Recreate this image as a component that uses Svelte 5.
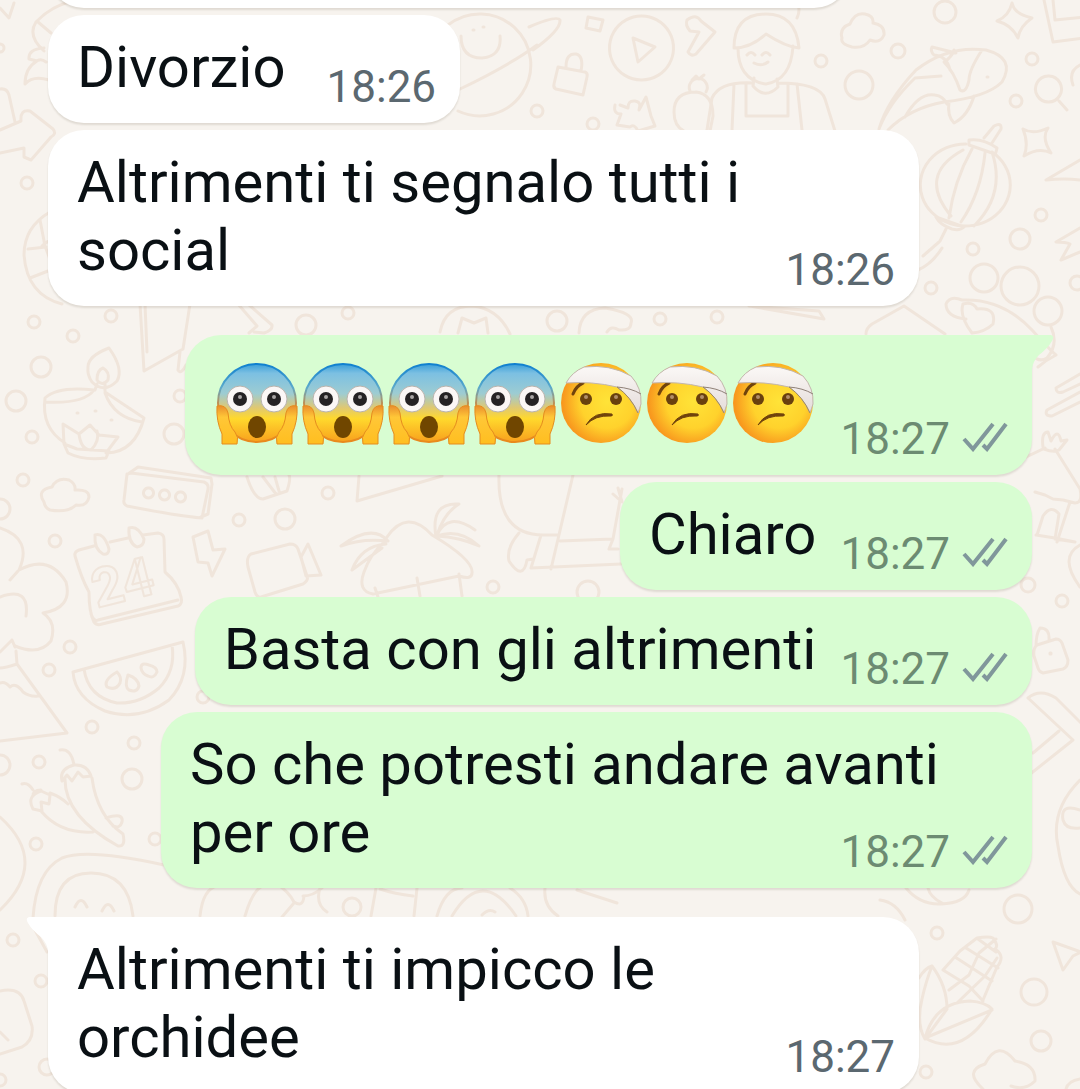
<script lang="ts">
  interface Message {
    out: boolean;
    text?: string;
    emojis?: string[];
    time: string;
    first?: boolean;
  }

  const messages: Message[] = [
    { out: false, text: 'Divorzio', time: '18:26' },
    { out: false, text: 'Altrimenti ti segnalo tutti i social', time: '18:26' },
    {
      out: true,
      emojis: ['scream', 'scream', 'scream', 'scream', 'bandage', 'bandage', 'bandage'],
      time: '18:27',
      first: true
    },
    { out: true, text: 'Chiaro', time: '18:27' },
    { out: true, text: 'Basta con gli altrimenti', time: '18:27' },
    { out: true, text: 'So che potresti andare avanti per ore', time: '18:27' },
    { out: false, text: 'Altrimenti ti impicco le orchidee', time: '18:27', first: true }
  ];

  // wallpaper bubbles: cx, cy, r
  const dots = [
    [945, 12, 11], [821, 61, 6], [898, 51, 7], [859, 85, 14], [1032, 59, 6], [1016, 101, 6],
    [537, 111, 6], [593, 124, 6], [1041, 215, 6], [1020, 239, 10], [973, 249, 6], [984, 278, 14],
    [1020, 286, 19], [1048, 311, 14], [931, 288, 6], [557, 321, 10], [660, 319, 6], [717, 317, 6],
    [1077, 283, 7], [34, 322, 6], [73, 336, 6], [111, 316, 6], [41, 367, 10], [16, 401, 10],
    [32, 437, 6], [23, 480, 6], [174, 434, 10], [180, 396, 6], [306, 325, 10], [348, 313, 6],
    [328, 493, 6], [239, 520, 6], [285, 519, 10], [55, 541, 6], [0, 509, 10], [70, 647, 6],
    [49, 670, 6], [92, 727, 6], [134, 743, 6], [132, 779, 10], [39, 762, 6], [0, 765, 10],
    [36, 844, 6], [155, 839, 6], [13, 940, 6], [41, 981, 6], [47, 1067, 8], [0, 1080, 6],
    [203, 697, 6], [493, 587, 6], [588, 592, 11], [1018, 909, 14], [937, 933, 6], [1034, 992, 13],
    [1041, 1041, 10], [926, 1072, 6], [1062, 601, 6], [1014, 681, 6], [1028, 585, 7], [27, 183, 6],
    [0, 48, 4], [352, 907, 9]
  ];

  const doodles = [
    // planet
    'M448 25a51 51 0 1 1 10 86M460 89Q510 65 537 45M529 27Q557 15 560 20Q561 30 533 50M461 36Q461 58 482 58Q502 56 500 36M473 30h1M483 27h1',
    // small cube, padlock, play
    'M588 17l15 3l-3 11l-14-3zM558 67l27 5q3 1 2 5l-4 18l-27-6q-3-1-2-5zM566 67q0-14 10-13q8 2 5 17M642 16a32 32 0 1 1-1 0M633 38l22 9l-17 15z',
    // mug and puzzle
    'M687 20q9-7 14 1l14 11l-19 22q-5 3-8-2l11-20l-9-1q-5-6-3-11M620 105l8 3q0-8 7-7q7 1 4 9l7-13l5 19l4 10l-17 5q-4-8-8-4l-13-2l4-11q-8 0-6-9',
    // cook
    'M734 48q0-34 32-34q30 0 33 34q-13-1-33-14q-15 14-32 14M738 48q0 32 28 36q25-4 27-38M754 78l-1 8q12 14 25 1l-1-8M753 83q-33-2-41 15l-5 32M778 83q42 0 47 16l10 32M734 84l-2 46M797 84l5 46M746 84v32h42V84M747 55q4-5 8 0M762 55q4-5 8 0M754 63q8 4 14-1M797 18q4-8 0-18',
    // pineapple
    'M696 92q17 2 17 24l-3 15M696 92q-22 0-22 20q0 14 10 19M690 91a9 9 0 1 1 16 1M692 80l4-4l3 3l5-4',
    // clouds
    'M842 38q-3-10 8-14q5-12 15-10q9 2 8 9q12 2 11 12q-4 9-14 5q-6 9-18 7q-12-3-10-9M44 502q-8-12 8-15q5-10 17-7q7 4 6 10q14-1 14 7q-2 10-13 8q-8 8-26 5q-5-2-6-8',
    // star shapes
    'M1012 3q2 11 20 15q-12 8-14 20q-6-13-21-17q12-5 15-18M1023 129q10 6 25-1q-7 10 3 25q-12-6-27 3q5-12-1-27',
    // koi
    'M879 129q8-28 37-59q32-25 70-20q30 8 16 32q-15 15-58 20q-34 6-56 28M950 70q-3-14-16-15q-4-4-2-8l24 6M879 129q10-26 36-51l26-2M905 117q14-25 30-22q8 1 12 9M954 50q-2 7-10 12q10 10 16 28q6 4 9-10q0-10 13-30M949 102q-2 14 5 21q14-7 20-27M987 77h1',
    // lantern
    'M966 144a45 41 0 1 0 26 8M963 150q-46 25-12 66M972 149q-18 32-23 69M985 153q-4 40-24 69M992 152q14 42-18 74M969 140q14-2 28 8q-1 5-2 6l-26-9zM936 217l28 10q-4 4-12 2q-12-4-16-12M984 138l10-12q8-4 7 3l-9 14M946 229l-6 12M939 242l-16 14M942 248q-10 16-24 22',
    // right edge, top
    'M1044 0l9 42l30-4M1053 0l2 20l29-3M1049 76a13 13 0 1 1-1 0M1059 101l8 9M1080 65q-12 6-7 20M1080 160l-34 20q18-2 34 0M1080 228l-24 14q10 0 14 2l-9 16l19-8',
    // top left
    'M0 8l9 10l5-15M36 22q20-21 48-22M36 22q-9 14 8 29M38 22l13 11M44 48q-16 1-15 11l8 2q-12 7-12 23q8-9 24-4M34 63q6-6 12-1M0 130l21-9q-1-12 9-10l23 18q4 5-2 8l-20 23l-7-3v-9l-24 5M0 89q7-1 9 6l6 27',
    // globe
    'M50 212q-26 15-26 43q3 40 38 49M40 220l5 26l9 24M28 249l18-2M30 278l18-7M42 246q10-10 14 0',
    // oil lamp
    'M88 367q0-11 21-19q15 21 8 33q-13 13-25 1q-5-7-4-15M97 380q0-10 6-12q7 4 5 12q-6 7-11 0M97 384l-2 6M105 384v7M94 390q-36-4-49 8q-4 30 20 45M105 392l39 26q-9 34-37 35M46 402q38 2 48-12M105 393q9 25 37 29M64 444l-1-20l16 10l11-9l9 10l19 2l-12 16M79 434q2 16 12 16q9-9 6-19M64 444l4 9q16 8 38 5l3-7l-32-2zM77 413h1M95 411h1M111 420h1',
    // message box
    'M127 474l4-1l73 9q5 2 4 7l-6 29q-24-2-75-12q-4-2-3-6zM128 474l10-7l73 11l1 6l-4 30l-7 3M148 488a5 5 0 1 0 1 0M164 490a5 5 0 1 0 1 0M180 492a5 5 0 1 0 1 0',
    // calendar
    'M94 546l-15 4q-5 2-4 6q7 24 14 36M110 542l18-4M143 535l15-2q6 1 6 6l1 33M89 592q0 20 5 30q3 4 8 2l76-18q5-2 3-9q-3-14-16-25M91 614q3 8 7 6l80-20M95 535q9-3 14 14q0 6-6 5q-9-5-8-19M129 528q9-3 15 11q0 7-7 8q-9-4-8-19',
    // lightning, camera
    'M193 537l15-6l5 19l12-1l-13 27l-4-13l-10-1zM251 554l39-10q6 0 8 5l9 27q2 4-4 8l-42 13q-4 1-6-5l-7-25q-2-10 3-13M301 557l7-13l13 31l-15 1z',
    // broccoli
    'M0 528q33 11 19 42q30-16 47 12q7 26-23 31q14 9 8 28q-12 15-36 5M0 597q30-11 26 19M10 580l8-9',
    // cone and slice
    'M15 647l-3-7l-12 12M16 651l1 13l50 69l-67 8M17 664q-12 4-17 4M0 683q5-2 10 4q6-5 13 5q7 5 15 4',
    // watermelon
    'M73 672l110-30q8 35-14 58q-30 22-64 11q-30-13-32-39M84 669q4 28 33 34q23 1 42-15q17-17 13-43M117 672q-14 8-10 15q9 4 13-4q2-6-3-11M128 675q-4 12 1 15q8 3 10-4q-1-8-11-11M141 668q0-6 8-3q8 2 8 7q-3 7-9 4q-6-2-7-8',
    // chillies
    'M60 750q11-2 14 15M62 781q-3-12 12-16q13-1 17 11l-8 1l-5-5l-6 9l-5-6zM65 778q-1 38 53 68q8 1 5-12q-26-18-31-56M22 784q6-2 11 6M33 796q0-6 8-6M41 791q-15 5-8 18l9 2l-1-9l8 2l1-9zM41 811q19 23 52 21M50 793q11 4 18 11M106 818q18-6 16 4q-2 7-9 4',
    // left edge lower
    'M0 817q50 45 0 93M33 918q3-47 29-60q25-10 102 7M55 916q0-43 36-43q37 0 42 43M75 907q6-13 12 0M102 911q6-13 12 0M35 930l12 22M0 991q20-4 24 10l8 25q2 14-10 21l-22 7M0 1032l8 8',
    // papers between groups
    'M140 304l4 67l39-22l7-45M145 304l2 48M180 352l-2 18q3 5 8-5M238 304l19 22l-8 7M248 304l24 21q1 5-8 8l-10-1M440 332q5-26 32-26q26 2 38 28M458 333l4-15l12 5l12-5l2 15M579 333q1-24 26-25q30 5 26 15q0 8-12 7q-8-5-12 2M750 306l74 13l-5-8l-70-5M866 334q0-6 6-10l32-18l41 28M946 304q4-9 16-4q40-2 70 30q20 22 24 25q-10 5-18 12M946 304q0 13 20 15M963 304q10-3 14 5q20-2 16 15q-8 8-21 9q-13-17-9-29',
    // palm hut
    'M383 543l4-6q20-29 45-2q42 25 40 38q0 7-13 3l-86 18q-16-3-9-22q6-17 19-29M388 541q-16-18-47 5q21-8 47-5M386 544q-25 2-34 26l30-22M436 537q-6-35 23-33q-15 9-22 31M437 535q11-24 38-5M437 536q22-8 42 10q-20-9-42-10M375 588l4 12M417 578l3 18M459 574l3 22',
    // snowman and slide
    'M499 475q-2 60 44 60h16M573 475l-22 94M519 533q-13 15-10 28q14 21 18-1l6-1M541 535l-10 33l90-4M560 541l53-2l9-50M613 539l-4 10h9M613 494l9 8l-4-14',
    // pencils in gap
    'M359 476l-2 25l85-25M247 477q7 22 16 22l24-8q4-12 2-16M263 477l13 17M275 477l4 14',
    // right side hut
    'M1005 467l40-19M1055 449l25 40q3 14-5 14l-12-3l-10-1l-8-4l-10-3M1043 447q-2-15 5-15l3 9q7-14 10 0l6-1l-8 10q-5 3-15-1M1037 535l6-19q8-12 16-2l-4 25l20 3l-20-4l-19-3M1070 502l-13 40',
    // sticks
    'M1080 374l-24 14q0 6 7 4l17-8M1080 392l-33 18q-3 6 5 6l28-14M1032 355q7 8 15 3q12-14 4-31',
    // lock right, leaf
    'M1036 646q0-12 4-18q10 0 9 12M1037 645l19-6q4 0 6 4l6 17q0 7-5 9l-20 4q-4-1-5-5l-4-12q-1-8 3-11M1050 653h1v1h-1zM1028 698q12-10 28 0l25 25M1028 698l45 42l-44 35M1033 753l26-22M1080 780q-30 30-22 66q6 40 22 48M1080 810q-20-7-17 10q3 10 17 8M1080 545q-22 12 0 42',
    // strip above last bubble
    'M200 916q3-28 18-30M245 916q8-28 20-31l12-1q12 8 17 18q9 6 10-6M294 903l-12 14M303 896q10 0 19-8M320 888q-5 16 7 24M376 888l-5 28M417 888l-3 28M380 889q15 5 33 7M437 916q8-28 25-28M452 916q30-50 64 0M510 888q16 10 18 28M482 915q7-7 13-3M545 888q-2 18 13 28M577 890l40 13M906 888q14 17 35 16q24-1 28-14M928 888q2 9 14 15',
    // corn
    'M919 978q6-10 13-12q15 20 15 43l-22 30q-9-15-3-40q4-18 10-33M925 1038q10-36 45-37q15 1 22 8q-30 50-67 29M925 1038l67-28M943 970l17-19l17-13q12-2 16 0q6 8 2 11q11 7 2 18l-14 33M943 970l26 16l14 15M955 957l37 24M966 948l32 20M978 939l18 13M949 990l20-15l10-22l17-14M957 1003l28-27l12-18',
    // bottom right
    'M983 1089q-20-18 2-25q13-25 30-3q21 3 20 20q-10 10-24 5M1053 942l10 28l10-14l8-4zM1066 1089q2-8 14-10M880 900q16 2 25 20'
  ];
</script>

<svelte:head>
  <title>Chat</title>
</svelte:head>

{#snippet scream()}
  <svg class="emoji" viewBox="0 0 86 86" role="img" aria-label="😱">
    <ellipse cx="43" cy="42" rx="39" ry="39" fill="url(#fear)" stroke="url(#rim)" stroke-width="2" />
    <path d="M3 45Q12 43 14 52Q15 65 21 71Q25 76 23 83H8V73Q2 60 3 45M83 45Q74 43 72 52Q71 65 65 71Q61 76 63 83H78V73Q84 60 83 45" fill="url(#hand)" stroke="#e58c1e" />
    <circle cx="26" cy="38" r="13" fill="#fbf7f6" stroke="#b9b3ad" />
    <circle cx="60" cy="38" r="13" fill="#fbf7f6" stroke="#b9b3ad" />
    <circle cx="26" cy="38" r="7" fill="#252224" />
    <circle cx="60" cy="38" r="7" fill="#252224" />
    <circle cx="26" cy="36" r="2" fill="#a9a5a5" />
    <circle cx="60" cy="36" r="2" fill="#a9a5a5" />
    <ellipse cx="43" cy="66" rx="9" ry="11" fill="#704600" />
  </svg>
{/snippet}

{#snippet bandage()}
  <svg class="emoji" viewBox="0 0 86 86" role="img" aria-label="🤕">
    <circle cx="43" cy="42" r="40" fill="url(#face)" />
    <path d="M15 33Q18 25 25 22" fill="none" stroke="#70430c" stroke-width="3" stroke-linecap="round" />
    <path d="M8 22Q14 11 26 6Q52 3 73 15Q84 27 83 43L80 52Q73 36 59 26Q34 20 8 22z" fill="url(#gauze)" stroke="#c2b6ad" />
    <path d="M59 26Q73 27 83 33" fill="none" stroke="#8f8178" />
    <path d="M59 26Q73 36 80 52" fill="none" stroke="#a08a5c" />
    <circle cx="28" cy="38" r="6" fill="#69400e" />
    <circle cx="58" cy="38" r="6" fill="#69400e" />
    <circle cx="28" cy="36" r="2" fill="#b28e68" />
    <circle cx="58" cy="36" r="2" fill="#b28e68" />
    <path d="M28 64Q36 50 54 53Q55 55 53 55Q37 54 28 64" fill="#70430c" stroke="#70430c" />
  </svg>
{/snippet}

<svg class="defs" aria-hidden="true">
  <defs>
    <linearGradient id="fear" x2="0" y2="1">
      <stop offset="0" stop-color="#3a9fd9" />
      <stop offset="0.12" stop-color="#7cc0e2" />
      <stop offset="0.38" stop-color="#9dccd2" />
      <stop offset="0.56" stop-color="#dfc873" />
      <stop offset="0.7" stop-color="#ffd92d" />
      <stop offset="1" stop-color="#f8a01d" />
    </linearGradient>
    <linearGradient id="rim" x2="0" y2="1">
      <stop offset="0" stop-color="#0f80d0" />
      <stop offset="0.3" stop-color="#5aa9cb" />
      <stop offset="0.55" stop-color="#d58a3a" />
      <stop offset="1" stop-color="#e9891c" />
    </linearGradient>
    <linearGradient id="hand" x2="0" y2="1">
      <stop offset="0" stop-color="#e98d2e" />
      <stop offset="0.3" stop-color="#ffc737" />
      <stop offset="1" stop-color="#ffbe20" />
    </linearGradient>
    <linearGradient id="gauze" x2="0" y2="1">
      <stop offset="0" stop-color="#fbf8f6" />
      <stop offset="1" stop-color="#e4dcda" />
    </linearGradient>
    <radialGradient id="face" cx="0.58" cy="0.48" r="0.56">
      <stop offset="0" stop-color="#ffe338" />
      <stop offset="0.6" stop-color="#ffd22c" />
      <stop offset="1" stop-color="#f8981e" />
    </radialGradient>
  </defs>
</svg>

<main class="chat">
  <svg class="wallpaper" viewBox="0 0 1080 1089" preserveAspectRatio="xMidYMin slice" aria-hidden="true">
    {#each dots as [cx, cy, r]}
      <circle {cx} {cy} {r} />
    {/each}
    {#each doodles as d}
      <path {d} />
    {/each}
    <text x="97" y="608" transform="rotate(-14 97 608)">24</text>
  </svg>

  <div class="bubble in previous"></div>

  {#each messages as message}
    <article class="bubble {message.out ? 'out' : 'in'}" class:first={message.first} class:stickers={message.emojis}>
      {#if message.first}
        <svg class="tail" viewBox="0 0 22 34" aria-hidden="true">
          <path d="M0 0H19Q23 1 20 6Q16 13 7 20Q1 26 0 34z" />
        </svg>
      {/if}
      {#if message.emojis}
        <span class="emojis">
          {#each message.emojis as emoji}
            {#if emoji === 'scream'}{@render scream()}{:else}{@render bandage()}{/if}
          {/each}
        </span>
      {:else}
        <span>{message.text}</span>
      {/if}
      <span class="meta">
        <time>{message.time}</time>
        {#if message.out}
          <svg class="ticks" viewBox="0 0 46 30" role="img" aria-label="Delivered">
            <path d="M2 17l9 10L31 2M21 23l4 4L44 2" />
          </svg>
        {/if}
      </span>
    </article>
  {/each}
</main>

<style>
  :global(body) {
    margin: 0;
    background: #f7f3ee;
  }

  .defs {
    position: absolute;
    width: 0;
    height: 0;
  }

  .chat {
    position: relative;
    display: flex;
    flex-direction: column;
    gap: 7px;
    height: 100vh;
    box-sizing: border-box;
    padding: 0 48px;
    overflow: hidden;
    font-family: Roboto, "Liberation Sans", sans-serif;
    font-size: 58px;
    line-height: 68px;
    color: #0a1014;
  }

  .wallpaper {
    position: absolute;
    inset: 0;
    width: 100%;
    height: 100%;
    fill: none;
    stroke: #f0e5db;
    stroke-width: 3;
    stroke-linecap: round;
    stroke-linejoin: round;
  }

  .wallpaper text {
    font-size: 54px;
    font-weight: bold;
    stroke-width: 2;
  }

  .bubble {
    position: relative;
    display: flow-root;
    flex-shrink: 0;
    box-sizing: border-box;
    max-width: 871px;
    padding: 18px 32px 10px 29px;
    border-radius: 36px;
    box-shadow: 0 2px 2px rgba(60, 40, 20, 0.12);
  }

  .in {
    align-self: flex-start;
    background: #fff;
  }

  .out {
    align-self: flex-end;
    background: #d8fdd2;
  }

  .previous {
    width: 802px;
    height: 108px;
    margin-top: -100px;
  }

  .first {
    margin-top: 22px;
  }

  .in.first {
    border-top-left-radius: 0;
  }

  .out.first {
    border-top-right-radius: 0;
  }

  .tail {
    position: absolute;
    top: 0;
    left: 100%;
    width: 22px;
    height: 34px;
    fill: #d8fdd2;
  }

  .in .tail {
    left: auto;
    right: 100%;
    fill: #fff;
    transform: scaleX(-1);
  }

  .meta {
    float: right;
    display: flex;
    align-items: center;
    gap: 12px;
    margin: 29px -8px 0 41px;
    font-size: 44px;
    line-height: 51px;
    color: #5b6870;
  }

  .out .meta {
    margin-left: 24px;
    color: #6c8b72;
  }

  .stickers .meta {
    margin-top: 61px;
  }

  .emojis {
    display: inline-flex;
    padding-top: 8px;
    vertical-align: top;
  }

  .emoji {
    width: 86px;
    height: 86px;
  }

  .ticks {
    width: 46px;
    height: 30px;
    margin-bottom: 6px;
    fill: none;
    stroke: #80979b;
    stroke-width: 4;
  }
</style>
